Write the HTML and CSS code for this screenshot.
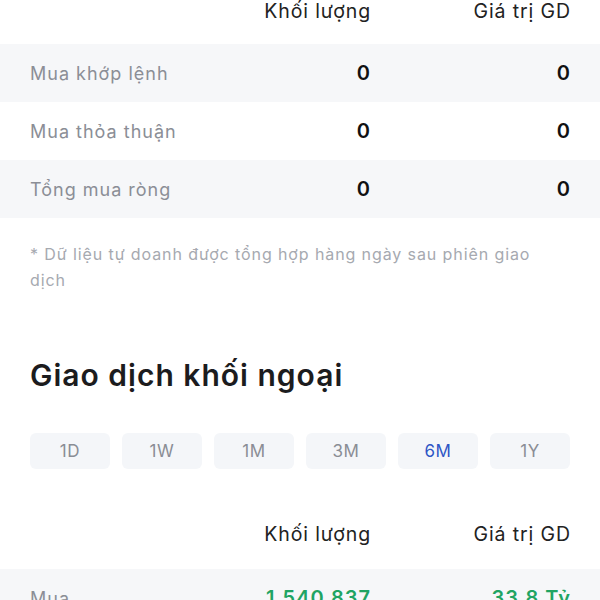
FILE: index.html
```html
<!DOCTYPE html>
<html lang="vi">
<head>
<meta charset="utf-8">
<link rel="stylesheet" href="styles.css">
</head>
<body>
<div class="page">
  <section class="table">
    <div class="thead first">
      <span></span><span>Khối lượng</span><span>Giá trị GD</span>
    </div>
    <div class="row alt"><span class="label">Mua khớp lệnh</span><span class="val">0</span><span class="val">0</span></div>
    <div class="row"><span class="label">Mua thỏa thuận</span><span class="val">0</span><span class="val">0</span></div>
    <div class="row alt"><span class="label">Tổng mua ròng</span><span class="val">0</span><span class="val">0</span></div>
  </section>

  <p class="note">* Dữ liệu tự doanh được tổng hợp hàng ngày sau phiên giao dịch</p>

  <h2 class="title">Giao dịch khối ngoại</h2>

  <div class="tabs">
    <button class="tab">1D</button>
    <button class="tab">1W</button>
    <button class="tab">1M</button>
    <button class="tab">3M</button>
    <button class="tab active">6M</button>
    <button class="tab">1Y</button>
  </div>

  <section class="table">
    <div class="thead second">
      <span></span><span>Khối lượng</span><span>Giá trị GD</span>
    </div>
    <div class="row alt"><span class="label">Mua</span><span class="val green">1.540.837</span><span class="val green">33,8 Tỷ</span></div>
    <div class="row"><span class="label">Bán</span><span class="val red">0</span><span class="val red">0</span></div>
  </section>
</div>
</body>
</html>
```
FILE: styles.css
```css
* { box-sizing: border-box; }
html, body { margin: 0; padding: 0; background: #fff; }
body {
  font-family: Inter, "Noto Sans", "Liberation Sans", sans-serif;
  color: #1c1c1e;
  width: 600px;
  overflow: hidden;
}
.page { display: flex; flex-direction: column; }

.thead, .row {
  display: grid;
  grid-template-columns: 1fr 140px 200px;
  padding: 0 30px;
  align-items: center;
}
.thead span {
  text-align: right;
  font-size: 19.5px;
  line-height: 22px;
  letter-spacing: 0.9px;
  margin-right: -1px;
  color: #222;
}
.thead.first { padding-bottom: 22px; }
.thead.second { padding-top: 54px; padding-bottom: 24px; }

.row { height: 58px; }
.row.alt { background: #f6f7f9; }
.label { font-size: 18px; letter-spacing: 1px; color: #8b8e96; }
.val {
  text-align: right;
  font-size: 20px;
  font-weight: 600;
  letter-spacing: 1px;
  margin-right: -1px;
  color: #111;
}
.val.green { color: #1fa463; }
.val.red { color: #e0393e; }

.note {
  margin: 23px 40px 0 30px;
  font-size: 16px;
  line-height: 26px;
  color: #a6a9b0;
  letter-spacing: 0.9px;
}
.title {
  margin: 64px 30px 0;
  font-size: 30px;
  line-height: 36px;
  font-weight: 600;
  letter-spacing: 1px;
  color: #1c1c1e;
}
.tabs {
  display: grid;
  grid-template-columns: repeat(6, 1fr);
  gap: 12px;
  margin: 40px 30px 0;
}
.tab {
  height: 36px;
  border: 0;
  border-radius: 6px;
  background: #f4f6f9;
  font-family: inherit;
  font-size: 17px;
  letter-spacing: 0.6px;
  color: #8a8d95;
  padding: 0;
}
.tab.active { color: #2f56c6; }
```
